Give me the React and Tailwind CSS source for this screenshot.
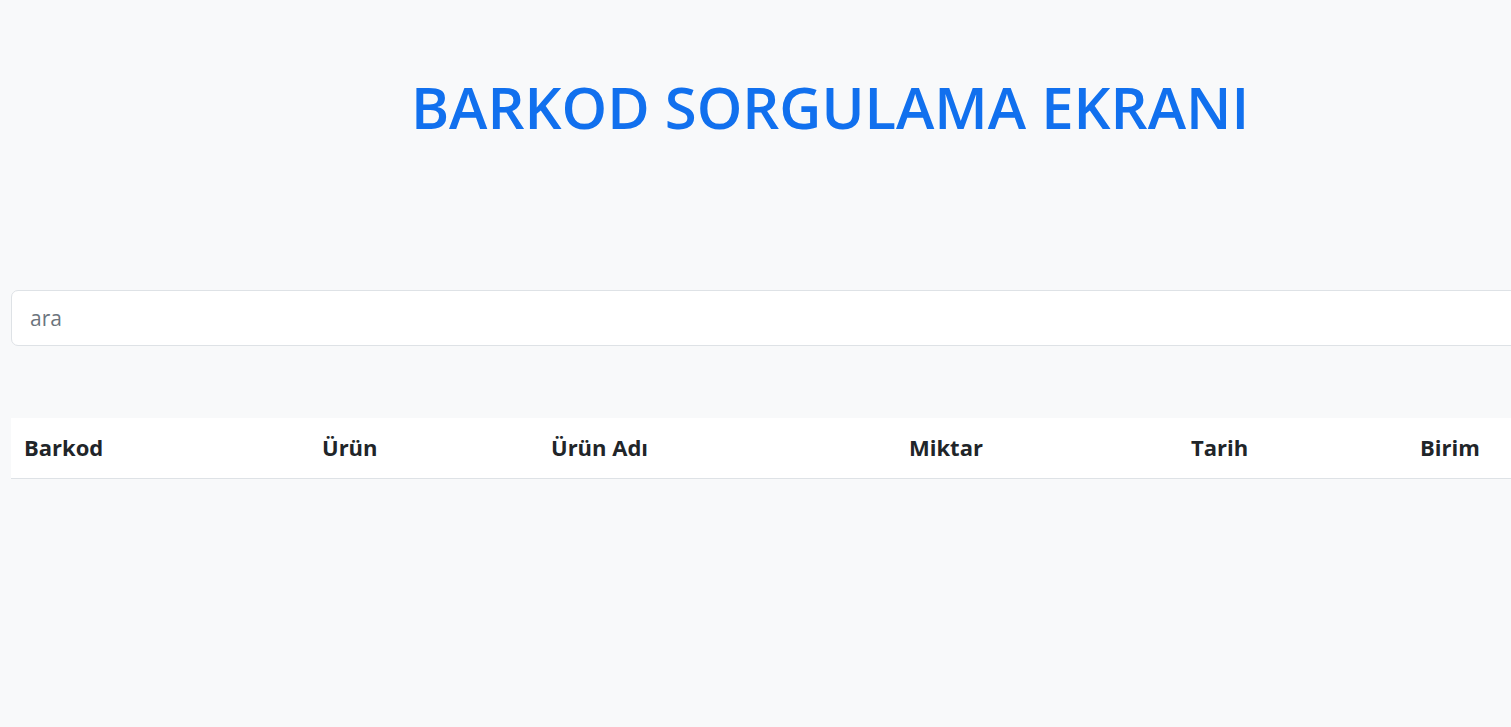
import React from 'react';

const columns = [
  { label: 'Barkod', width: 'w-[298px]' },
  { label: 'Ürün', width: 'w-[229px]' },
  { label: 'Ürün Adı', width: 'w-[358px]' },
  { label: 'Miktar', width: 'w-[282px]' },
  { label: 'Tarih', width: 'w-[229px]' },
  { label: 'Birim', width: 'w-[229px]' },
];

export default function App() {
  return (
    <div className="min-h-[727px] w-[1660px] bg-[#f8f9fa] font-['Open_Sans','Noto_Sans',sans-serif] text-[#212529]">
      <div className="px-[11px]">
        <h1 className="pt-[72px] text-center text-[58px] font-semibold leading-[1.2] text-[#1170ee]">
          BARKOD SORGULAMA EKRANI
        </h1>

        <div className="mt-[148px]">
          <input
            type="text"
            placeholder="ara"
            className="h-[56px] w-full rounded-[7px] border border-[#dee2e6] bg-white px-[18px] text-[21px] text-[#212529] outline-none placeholder:text-[#6c757d]"
          />
        </div>

        <table className="mt-[72px] w-full table-fixed border-collapse">
          <thead>
            <tr className="h-[61px] border-b border-[#dee2e6] bg-white">
              {columns.map((c) => (
                <th
                  key={c.label}
                  className={`${c.width} px-[13px] text-left text-[22px] font-bold text-[#212529]`}
                >
                  {c.label}
                </th>
              ))}
              <th className="px-[13px]"></th>
            </tr>
          </thead>
          <tbody></tbody>
        </table>
      </div>
    </div>
  );
}
